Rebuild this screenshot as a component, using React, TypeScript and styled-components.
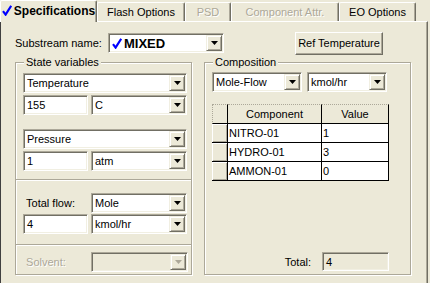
import { Fragment } from "react";
import styled, { createGlobalStyle } from "styled-components";

const GlobalStyle = createGlobalStyle`
  html, body {
    margin: 0;
    padding: 0;
    background: #ece9d8;
  }
  body {
    font-family: "Liberation Sans", Arial, sans-serif;
    font-size: 11px;
    color: #000;
  }
`;

const Screen = styled.div`
  width: 430px;
  height: 283px;
  overflow: hidden;
  background: #ece9d8;
`;

const TabStrip = styled.div`
  display: flex;
  align-items: flex-end;
  height: 21px;
  position: relative;
  z-index: 1;
`;

const Tab = styled.div<{ $w: number; $active?: boolean; $disabled?: boolean }>`
  width: ${(p) => p.$w}px;
  height: ${(p) => (p.$active ? 22 : 19)}px;
  margin-bottom: ${(p) => (p.$active ? -1 : 0)}px;
  box-sizing: border-box;
  border-top: 1px solid #fff;
  border-left: 1px solid #fff;
  border-right: 1px solid #716f64;
  box-shadow: inset -1px 0 0 #aca899;
  border-radius: 2px 2px 0 0;
  background: #ece9d8;
  display: flex;
  align-items: center;
  justify-content: center;
  gap: 2px;
  padding-bottom: ${(p) => (p.$active ? 2 : 0)}px;
  font-size: ${(p) => (p.$active ? 12 : 11)}px;
  font-weight: ${(p) => (p.$active ? 700 : 400)};
  color: ${(p) => (p.$disabled ? "#aca899" : "#000")};
  text-shadow: ${(p) => (p.$disabled ? "1px 1px 0 #fff" : "none")};
  white-space: nowrap;
`;

const Panel = styled.div`
  width: 428px;
  height: 270px;
  box-sizing: border-box;
  border-top: 1px solid #fff;
  border-left: 1px solid #404040;
  border-right: 1px solid #716f64;
  box-shadow: inset -1px 0 0 #aca899;
  padding: 9px 0 0 14px;
`;

const TopRow = styled.div`
  display: flex;
  align-items: center;
  height: 24px;
`;

const Label = styled.span<{ $w?: number; $disabled?: boolean }>`
  width: ${(p) => (p.$w ? `${p.$w}px` : "auto")};
  flex: none;
  white-space: nowrap;
  color: ${(p) => (p.$disabled ? "#aca899" : "#000")};
  text-shadow: ${(p) => (p.$disabled ? "1px 1px 0 #fff" : "none")};
`;

const Sunken = styled.div<{ $w: number; $h?: number; $bg?: string }>`
  width: ${(p) => p.$w}px;
  height: ${(p) => p.$h ?? 20}px;
  box-sizing: border-box;
  flex: none;
  border: 1px solid;
  border-color: #aca899 #fff #fff #aca899;
  box-shadow: inset 1px 1px 0 #716f64, inset -1px -1px 0 #f1efe2;
  background: ${(p) => p.$bg ?? "#fff"};
  padding: 1px;
  display: flex;
  align-items: center;
`;

const FieldText = styled.span<{ $bold?: boolean }>`
  flex: 1;
  padding-left: 2px;
  display: flex;
  align-items: center;
  gap: 2px;
  white-space: nowrap;
  font-size: ${(p) => (p.$bold ? 13 : 11)}px;
  font-weight: ${(p) => (p.$bold ? 700 : 400)};
`;

const DropButton = styled.span`
  width: 16px;
  height: 16px;
  box-sizing: border-box;
  flex: none;
  background: #ece9d8;
  border: 1px solid;
  border-color: #f1efe2 #716f64 #716f64 #f1efe2;
  box-shadow: inset 1px 1px 0 #fff, inset -1px -1px 0 #aca899;
  display: flex;
  align-items: center;
  justify-content: center;
`;

const PushButton = styled.button`
  margin-left: 71px;
  width: 88px;
  height: 23px;
  box-sizing: border-box;
  background: #ece9d8;
  border: 1px solid;
  border-color: #fff #716f64 #716f64 #fff;
  box-shadow: inset -1px -1px 0 #aca899;
  font-family: "Liberation Sans", Arial, sans-serif;
  font-size: 11px;
  color: #000;
  padding: 0;
`;

const Columns = styled.div`
  display: flex;
  gap: 12px;
  margin-top: 7px;
`;

const Group = styled.div<{ $w: number }>`
  width: ${(p) => p.$w}px;
  height: 213px;
  box-sizing: border-box;
  border: 1px solid #aca899;
  box-shadow: inset 1px 1px 0 #fff, 1px 1px 0 #fff;
  padding: 0 4px 3px 7px;
  display: flex;
  flex-direction: column;
`;

const Legend = styled.span`
  align-self: flex-start;
  margin: -7px 0 0 1px;
  padding: 0 2px;
  line-height: 13px;
  background: #ece9d8;
`;

const Row = styled.div<{ $mt?: number; $gap?: number }>`
  display: flex;
  align-items: center;
  gap: ${(p) => p.$gap ?? 3}px;
  margin-top: ${(p) => p.$mt ?? 0}px;
`;

const Separator = styled.div<{ $mt: number }>`
  margin: ${(p) => p.$mt}px -4px 0 -7px;
  height: 0;
  border-top: 1px solid #aca899;
  border-bottom: 1px solid #fff;
`;

const Grid = styled.div`
  margin-top: 12px;
  display: grid;
  grid-template-columns: 16px 94px 67px;
  grid-template-rows: 20px 19px 19px 19px;
`;

const Cell = styled.div<{ $kind: "corner" | "head" | "rowhead" | "data" }>`
  box-sizing: border-box;
  border-right: 1px solid #000;
  border-bottom: 1px solid #000;
  border-top: ${(p) =>
    p.$kind === "corner" || p.$kind === "head" ? "1px dotted #aca899" : "none"};
  border-left: ${(p) =>
    p.$kind === "corner" ? "1px dotted #aca899" : "none"};
  background: ${(p) => (p.$kind === "data" ? "#fff" : "#ece9d8")};
  box-shadow: ${(p) =>
    p.$kind === "rowhead"
      ? "inset 1px 1px 0 #fff, inset -1px -1px 0 #aca899"
      : "none"};
  display: flex;
  align-items: center;
  justify-content: ${(p) => (p.$kind === "head" ? "center" : "flex-start")};
  padding-left: ${(p) => (p.$kind === "data" ? 1 : 0)}px;
  white-space: nowrap;
`;

const TotalRow = styled.div`
  margin-top: auto;
  width: 177px;
  display: flex;
  align-items: center;
  justify-content: flex-end;
  gap: 11px;
`;

const Arrow = ({ disabled }: { disabled?: boolean }) => (
  <svg width="7" height="4" viewBox="0 0 7 4">
    <polygon points="0,0 7,0 3.5,4" fill={disabled ? "#aca899" : "#000"} />
  </svg>
);

const Check = () => (
  <svg width="10" height="11" viewBox="0 0 10 11">
    <path d="M1 6.2 L3.6 9.6 L9.2 0.8" stroke="#0000ff" strokeWidth="2.2" fill="none" />
  </svg>
);

const Combo = ({
  w,
  value,
  disabled,
}: {
  w: number;
  value?: string;
  disabled?: boolean;
}) => (
  <Sunken $w={w} $bg={disabled ? "#ece9d8" : "#fff"}>
    <FieldText>{value}</FieldText>
    <DropButton>
      <Arrow disabled={disabled} />
    </DropButton>
  </Sunken>
);

const Edit = ({ w, value }: { w: number; value: string }) => (
  <Sunken $w={w}>
    <FieldText>{value}</FieldText>
  </Sunken>
);

const components = [
  ["NITRO-01", "1"],
  ["HYDRO-01", "3"],
  ["AMMON-01", "0"],
];

export default function App() {
  return (
    <Screen>
      <GlobalStyle />
      <TabStrip>
        <Tab $w={97} $active>
          <Check />
          Specifications
        </Tab>
        <Tab $w={88}>Flash Options</Tab>
        <Tab $w={46} $disabled>
          PSD
        </Tab>
        <Tab $w={108} $disabled>
          Component Attr.
        </Tab>
        <Tab $w={77}>EO Options</Tab>
      </TabStrip>
      <Panel>
        <TopRow>
          <Label $w={93}>Substream name:</Label>
          <Sunken $w={116}>
            <FieldText $bold>
              <Check />
              MIXED
            </FieldText>
            <DropButton>
              <Arrow />
            </DropButton>
          </Sunken>
          <PushButton>Ref Temperature</PushButton>
        </TopRow>
        <Columns>
          <Group $w={177}>
            <Legend>State variables</Legend>
            <Row $mt={4}>
              <Combo w={164} value="Temperature" />
            </Row>
            <Row $mt={2}>
              <Edit w={65} value="155" />
              <Combo w={96} value="C" />
            </Row>
            <Row $mt={14}>
              <Combo w={164} value="Pressure" />
            </Row>
            <Row $mt={2}>
              <Edit w={65} value="1" />
              <Combo w={96} value="atm" />
            </Row>
            <Separator $mt={8} />
            <Row $mt={12}>
              <Label $w={65}>&nbsp;Total flow:</Label>
              <Combo w={96} value="Mole" />
            </Row>
            <Row $mt={1}>
              <Edit w={65} value="4" />
              <Combo w={96} value="kmol/hr" />
            </Row>
            <Separator $mt={10} />
            <Row $mt={6}>
              <Label $w={65} $disabled>
                &nbsp;Solvent:
              </Label>
              <Combo w={97} disabled />
            </Row>
          </Group>
          <Group $w={207}>
            <Legend>Composition</Legend>
            <Row $mt={3} $gap={5}>
              <Combo w={90} value="Mole-Flow" />
              <Combo w={80} value="kmol/hr" />
            </Row>
            <Grid>
              <Cell $kind="corner" />
              <Cell $kind="head">Component</Cell>
              <Cell $kind="head">Value</Cell>
              {components.map(([name, value]) => (
                <Fragment key={name}>
                  <Cell $kind="rowhead" />
                  <Cell $kind="data">{name}</Cell>
                  <Cell $kind="data">{value}</Cell>
                </Fragment>
              ))}
            </Grid>
            <TotalRow>
              <Label>Total:</Label>
              <Sunken $w={67} $h={19} $bg="#ece9d8">
                <FieldText>4</FieldText>
              </Sunken>
            </TotalRow>
          </Group>
        </Columns>
      </Panel>
    </Screen>
  );
}
